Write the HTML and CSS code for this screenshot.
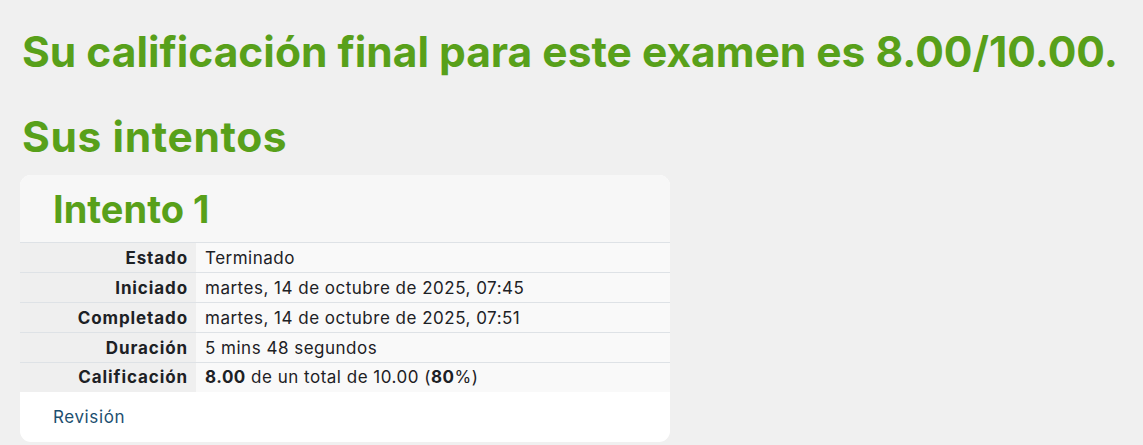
FILE: index.html
```html
<!DOCTYPE html>
<html lang="es">
<head>
<meta charset="utf-8">
<title>Calificación</title>
<link rel="stylesheet" href="styles.css">
</head>
<body>
<main class="page">
  <h2 class="grade">Su calificación final para este examen es 8.00/10.00.</h2>
  <h2 class="attempts-title">Sus intentos</h2>
  <section class="card">
    <header class="card-head">
      <h3 class="card-title">Intento 1</h3>
    </header>
    <table class="summary">
      <tbody>
        <tr><th>Estado</th><td>Terminado</td></tr>
        <tr><th>Iniciado</th><td>martes, 14 de octubre de 2025, 07:45</td></tr>
        <tr><th>Completado</th><td>martes, 14 de octubre de 2025, 07:51</td></tr>
        <tr><th>Duración</th><td>5 mins 48 segundos</td></tr>
        <tr class="last"><th>Calificación</th><td><b>8.00</b> de un total de 10.00 (<b>80</b>%)</td></tr>
      </tbody>
    </table>
    <footer class="card-foot">
      <a class="review" href="#">Revisión</a>
    </footer>
  </section>
</main>
</body>
</html>
```

FILE: styles.css
```css
html, body {
  margin: 0;
  padding: 0;
  background: #f0f0f0;
}
body {
  font-family: "Inter", "Open Sans", sans-serif;
  color: #1d2125;
}
.page {
  padding: 27px 20px 0 20px;
}
.grade, .attempts-title {
  margin: 0;
  color: #58a01a;
  font-weight: 700;
  font-size: 42.5px;
  line-height: 50px;
  padding-left: 2px;
}
.grade {
  margin-bottom: 35px;
}
.attempts-title {
  letter-spacing: 0.6px;
  margin-bottom: 13px;
}
.card {
  width: 650px;
  background: #ffffff;
  border-radius: 11px;
  overflow: hidden;
}
.card-head {
  background: #f7f7f7;
  height: 67px;
  display: flex;
  align-items: center;
  padding-left: 33px;
}
.card-title {
  margin: 0;
  color: #58a01a;
  font-size: 38px;
  font-weight: 700;
}
.summary {
  width: 100%;
  border-collapse: collapse;
  font-size: 17px;
}
.summary tr {
  border-top: 1px solid #dee2e6;
  height: 30px;
}
.summary tr.last {
  height: 29px;
}
.summary th {
  width: 176px;
  box-sizing: border-box;
  background: #efefef;
  text-align: right;
  font-weight: 700;
  letter-spacing: 0.9px;
  padding: 0 8px 0 0;
}
.summary td {
  background: #f9f9f9;
  padding: 0 0 0 9px;
  font-weight: 400;
  letter-spacing: 0.5px;
}
.card-foot {
  height: 50px;
  display: flex;
  align-items: center;
  padding-left: 33px;
}
.review {
  color: #1d4f70;
  text-decoration: none;
  font-size: 17px;
  letter-spacing: 0.6px;
}
```
